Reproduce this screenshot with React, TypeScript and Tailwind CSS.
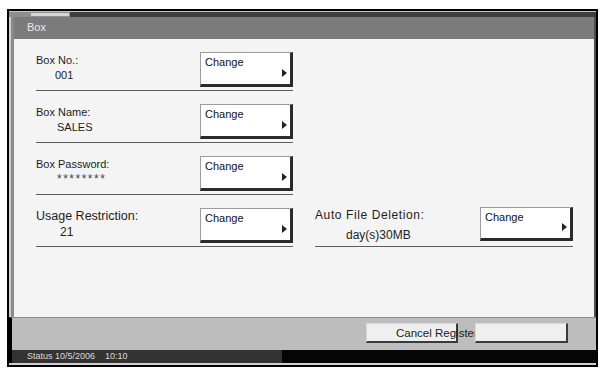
import type { JSX } from 'react';

const font = { fontFamily: '"Liberation Sans", Arial, sans-serif' };

function ChangeButton({ tall = false }: { tall?: boolean }): JSX.Element {
  return (
    <div
      className={`relative w-[93px] ${tall ? 'h-[34px]' : 'h-[35px]'} bg-white border border-[#9c9c9c] border-r-[3px] border-b-[3px] border-r-[#2b2b2b] border-b-[#2b2b2b] pl-[4px] pt-[3px] text-[11px] leading-[13px] text-[#111]`}>
      Change
      <span className="absolute right-[3px] bottom-[7px] w-0 h-0 border-y-[4px] border-y-transparent border-l-[5px] border-l-[#222]"></span>
    </div>
  );
}

type Row = { label: string; value: string; big?: boolean; stars?: boolean; indent: string };

const rows: Row[] = [
  { label: 'Box No.:', value: '001', indent: 'pl-[19px]' },
  { label: 'Box Name:', value: 'SALES', indent: 'pl-[21px]' },
  { label: 'Box Password:', value: '********', stars: true, indent: 'pl-[21px]' },
  { label: 'Usage Restriction:', value: '21', big: true, indent: 'pl-[24px]' },
];

export default function App(): JSX.Element {
  return (
    <div className="w-[601px] h-[368px] bg-white pt-[9px] pl-[7px]" style={font}>
      <div className="w-[591px] h-[358px] border-2 border-black flex flex-col bg-[#bdbdbd]">
        {/* top band */}
        <div className="h-[6px] flex border-t border-[#c4c4c4]">
          <div className="w-[61px] bg-[#8e8e8e] flex">
            <div className="ml-[22px] mt-[1px] w-[38px] h-[3px] bg-[#d6d6d6]"></div>
          </div>
          <div className="flex-1 bg-[#3e3e3e]"></div>
        </div>

        <div className="flex h-[300px]">
          <div className="w-[5px] bg-[#8a8a8a] border-l-2 border-[#cfcfcf]"></div>
          <div className="flex-1 flex flex-col">
            <div className="h-[22px] bg-[#7b7b7b] pl-[13px] pt-[4px] text-[11px] leading-[13px] text-[#ececec]">
              Box
            </div>
            <div className="flex-1 bg-[#f4f4f4] pl-[22px]">
              <div className="grid grid-cols-[257px_258px] gap-x-[22px]">
                {rows.map((r, i) => (
                  <div
                    key={r.label}
                    className={`col-start-1 ${['row-start-1', 'row-start-2', 'row-start-3', 'row-start-4'][i]} h-[52px] border-b border-[#5c5c5c] flex justify-between pt-[13px] text-[#1c1c1c]`}>
                    <div className={r.big ? 'pt-[0px]' : 'pt-[1px]'}>
                      <div className={r.big ? 'text-[12.5px] leading-[16px]' : 'text-[11px] leading-[15px]'}>
                        {r.label}
                      </div>
                      <div
                        className={`${r.indent} ${r.big ? 'text-[12px] leading-[16px]' : 'text-[11px] leading-[15px]'} ${r.stars ? 'tracking-[1.5px] text-[12px] text-[#444]' : ''}`}>
                        {r.value}
                      </div>
                    </div>
                    <ChangeButton />
                  </div>
                ))}
                <div className="col-start-2 row-start-4 h-[52px] border-b border-[#5c5c5c] flex justify-between pt-[12px] text-[#1c1c1c]">
                  <div>
                    <div className="text-[12px] leading-[16px] tracking-[0.6px]">Auto File Deletion:</div>
                    <div className="pl-[31px] pt-[4px] text-[12px] leading-[16px]">day(s)30MB</div>
                  </div>
                  <ChangeButton tall />
                </div>
              </div>
            </div>
          </div>
          <div className="w-[2px] bg-[#4e4e4e]"></div>
        </div>

        {/* bottom bar */}
        <div className="h-[33px] bg-[#bdbdbd] border-l-[3px] border-black border-t border-t-[#8a8a8a] flex items-start pt-[5px] pl-[354px] gap-[17px]">
          <div className="w-[92px] h-[20px] bg-[#efefef] border border-[#d8d8d8] border-r-2 border-b-2 border-r-[#3a3a3a] border-b-[#3a3a3a] pl-[29px] pt-[2px] text-[11.5px] leading-[14px] text-[#222] whitespace-nowrap">
            Cancel Register
          </div>
          <div className="w-[93px] h-[20px] bg-[#efefef] border border-[#d8d8d8] border-r-2 border-b-2 border-r-[#3a3a3a] border-b-[#3a3a3a]"></div>
        </div>

        {/* status bar */}
        <div className="h-[13px] flex border-l-[3px] border-black">
          <div className="w-[270px] bg-[#333333] pl-[15px] text-[9px] leading-[13px] text-[#dcdcdc] whitespace-nowrap">
            Status 10/5/2006 &nbsp;&nbsp;&nbsp;10:10
          </div>
          <div className="flex-1 bg-[#050505]"></div>
        </div>
        <div className="h-[2px] bg-[#d0d0d0]"></div>
      </div>
    </div>
  );
}
